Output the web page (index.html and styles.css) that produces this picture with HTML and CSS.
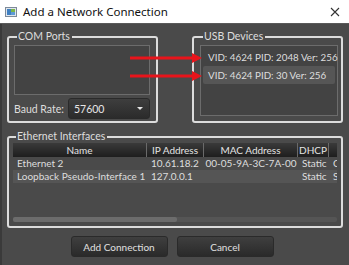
FILE: index.html
```html
<!DOCTYPE html>
<html>
<head>
<meta charset="utf-8">
<link rel="stylesheet" href="styles.css">
</head>
<body>
<div class="window">
  <div class="titlebar">
    <svg class="appicon" width="12" height="10" viewBox="0 0 12 10">
      <rect x="0.5" y="0.5" width="11" height="9" fill="#dfe6ee" stroke="#7d8a99"/>
      <rect x="2" y="2" width="4" height="6" fill="#3f7fc1"/>
      <rect x="6" y="2" width="4" height="3" fill="#7ab648"/>
      <rect x="6" y="5" width="4" height="3" fill="#5d9bd6"/>
    </svg>
    <span class="title">Add a Network Connection</span>
    <svg class="close" width="10" height="10" viewBox="0 0 10 10">
      <path d="M1 1 L9 9 M9 1 L1 9" stroke="#333" stroke-width="1.1"/>
    </svg>
  </div>
  <div class="content">
    <div class="toprow">
      <fieldset class="group com">
        <legend>COM Ports</legend>
        <div class="listbox comlist"></div>
        <div class="baudrow">
          <span class="baudlabel">Baud Rate:</span>
          <div class="combo"><span>57600</span><span class="caret"></span></div>
        </div>
      </fieldset>
      <fieldset class="group usb">
        <legend>USB Devices</legend>
        <div class="listbox usblist">
          <div class="item">VID: 4624 PID: 2048 Ver: 256</div>
          <div class="item sel">VID: 4624 PID: 30 Ver: 256</div>
        </div>
      </fieldset>
    </div>
    <fieldset class="group eth">
      <legend>Ethernet Interfaces</legend>
      <div class="table">
        <div class="thead">
          <div class="c c1">Name</div>
          <div class="c c2">IP Address</div>
          <div class="c c3">MAC Address</div>
          <div class="c c4">DHCP</div>
          <div class="c c5"></div>
        </div>
        <div class="trow">
          <div class="c c1 l">Ethernet 2</div>
          <div class="c c2 l">10.61.18.2</div>
          <div class="c c3">00-05-9A-3C-7A-00</div>
          <div class="c c4 l">Static</div>
          <div class="c c5 l">C</div>
        </div>
        <div class="trow alt">
          <div class="c c1 l">Loopback Pseudo-Interface 1</div>
          <div class="c c2 l">127.0.0.1</div>
          <div class="c c3"></div>
          <div class="c c4 l">Static</div>
          <div class="c c5 l">S</div>
        </div>
        <div class="tfill"></div>
        <div class="hscroll"><div class="thumb"></div></div>
      </div>
    </fieldset>
    <div class="buttons">
      <button class="btn">Add Connection</button>
      <button class="btn">Cancel</button>
    </div>
  </div>
  <svg class="arrows" width="349" height="265" viewBox="0 0 349 265">
    <line x1="128" y1="58" x2="192" y2="58" stroke="#e8141b" stroke-width="3"/>
    <polygon points="190,53 200,58 190,63" fill="#e8141b"/>
    <line x1="128" y1="76" x2="192" y2="76" stroke="#e8141b" stroke-width="3"/>
    <polygon points="190,71 200,76 190,81" fill="#e8141b"/>
  </svg>
</div>
</body>
</html>
```
FILE: styles.css
```css
* { box-sizing: border-box; }
html, body { margin: 0; padding: 0; }
body {
  width: 349px;
  height: 265px;
  overflow: hidden;
  background: #4a4a4a;
  font-family: "Lato", "Noto Sans", sans-serif;
  font-size: 10px;
  color: #dedede;
}
.window { position: relative; width: 349px; height: 265px; border-left: 2px solid #3a3a3a; }
.titlebar {
  height: 24px;
  background: #ffffff;
  border-bottom: 1px solid #5a5a5a;
  display: flex;
  align-items: center;
  padding-left: 5px;
  padding-right: 9px;
  margin-left: -2px;
}
.appicon { margin-right: 6px; }
.title { font-family: "Noto Sans", sans-serif; font-size: 11.5px; color: #111; flex: 1; }
.close { display: block; }
.content { padding: 6px 0 0 5px; }
.toprow { display: flex; gap: 34px; }
.group {
  margin: 0;
  padding: 0;
  border: 2px solid #dcdcdc;
  border-radius: 3px;
  min-width: 0;
}
.group legend {
  padding: 0 2px 0 1px;
  margin-left: 3px;
  line-height: 13px;
  font-size: 10.5px;
  color: #dedede;
}
.com { width: 151px; height: 93px; padding: 2px 0 0 5px; }
.usb { width: 151px; height: 93px; padding: 2px 0 0 6px; }
.listbox { border: 1px solid #6c6c6c; background: #434343; }
.comlist { width: 136px; height: 50px; }
.usblist { width: 138px; height: 71px; padding: 2px 2px; }
.item { height: 18px; line-height: 18px; padding-left: 5px; white-space: nowrap; font-size: 9.8px; }
.item.sel { background: #565656; border-radius: 2px; }
.baudrow { display: flex; align-items: center; margin-top: 3px; }
.baudlabel { width: 54px; font-size: 10.5px; }
.combo {
  width: 82px;
  height: 21px;
  border-radius: 3px;
  background: linear-gradient(#3e3e3e, #2b2b2b);
  border: 1px solid #2a2a2a;
  display: flex;
  align-items: center;
  justify-content: space-between;
  padding: 0 6px 0 5px;
  color: #e6e6e6;
  font-size: 10.5px;
}
.caret { width: 0; height: 0; border-left: 3px solid transparent; border-right: 3px solid transparent; border-top: 3px solid #e6e6e6; }
.eth { width: 336px; height: 98px; margin-top: 7px; padding: 0 4px 0 4px; }
.table { display: flex; flex-direction: column; height: 84px; }
.thead, .trow { display: flex; white-space: nowrap; }
.thead { height: 14px; background: linear-gradient(#3a3a3a, #1e1e1e); }
.thead .c { text-align: center; line-height: 14px; border-right: 1px solid #6a6a6a; color: #e4e4e4; }
.thead .c5 { border-right: none; flex: 1; }
.trow { height: 13px; line-height: 13px; }
.trow.alt { background: #555555; }
.c { overflow: hidden; }
.c1 { width: 134px; }
.c2 { width: 57px; }
.c3 { width: 94px; text-align: center; }
.c4 { width: 31px; }
.c5 { width: 8px; }
.l { padding-left: 4px; }
.tfill { flex: 1; }
.hscroll { height: 5px; background: #555; border-radius: 2px; margin-bottom: 5px; }
.thumb { width: 164px; height: 5px; background: #6c6c6c; border-radius: 2px; }
.buttons { display: flex; justify-content: center; gap: 9px; margin-top: 8px; padding-right: 12px; }
.btn {
  width: 97px;
  height: 21px;
  border: 1px solid #2a2a2a;
  border-radius: 3px;
  background: linear-gradient(#3f3f3f, #2a2a2a);
  color: #e0e0e0;
  font-family: "Lato", "Noto Sans", sans-serif;
  font-size: 10px;
  padding: 0;
}
.arrows { position: absolute; left: 0; top: 0; pointer-events: none; }
```
